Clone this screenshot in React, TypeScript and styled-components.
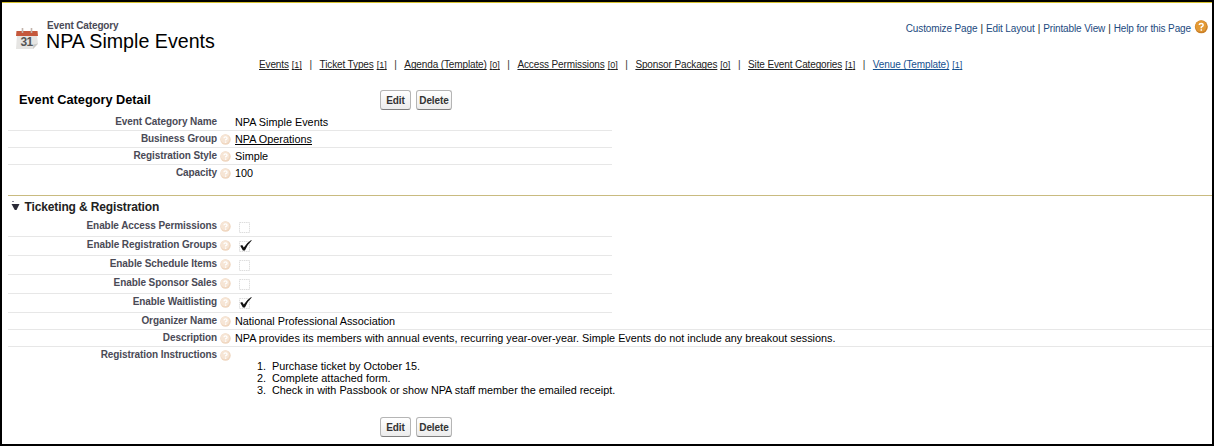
import React from "react";
import styled, { createGlobalStyle } from "styled-components";

const GlobalStyle = createGlobalStyle`
  *, *::before, *::after { box-sizing: border-box; }
  body { margin: 0; background: #fff; }
`;

const Page = styled.div`
  display: flex;
  flex-direction: column;
  width: 1214px;
  height: 446px;
  border: 2px solid #000;
  background: #fff;
  color: #000;
  font-family: "Liberation Sans", Arial, Helvetica, sans-serif;
  font-size: 10.84px;
  overflow: hidden;
  white-space: nowrap;
`;

const Header = styled.header`
  display: flex;
  justify-content: space-between;
  height: 54px;
  border-top: 1px solid #d6c02c;
  padding: 17px 4px 0 14px;
`;

const TitleBlock = styled.div`
  display: flex;
  gap: 8px;
`;

const CalendarIcon = styled.svg`
  width: 22px;
  height: 22px;
  margin-top: 8px;
`;

const Kind = styled.div`
  padding-left: 1px;
  font-size: 10px;
  letter-spacing: -0.13px;
  line-height: 12px;
  font-weight: bold;
  color: #4a4a56;
`;

const Title = styled.h1`
  margin: -3px 0 0;
  font-size: 19.65px;
  line-height: 24px;
  font-weight: normal;
`;

const HelpLinks = styled.nav`
  display: flex;
  align-items: flex-start;
  height: 16px;
  font-size: 10px;
  letter-spacing: -0.12px;
  line-height: 18px;
  color: #222;
`;

const HelpLink = styled.a`
  color: #1c4a80;
`;

const Divider = styled.span`
  margin: 0 3px;
`;

const HelpBall = styled.svg`
  width: 14px;
  height: 14px;
  margin: 0 0 0 3px;
`;

const RelatedLists = styled.nav`
  display: flex;
  height: 34px;
  padding: 2px 0 0 257px;
  font-size: 10px;
  letter-spacing: -0.125px;
  line-height: 14px;
`;

const RelatedItem = styled.span<{ $active?: boolean }>`
  color: ${(p) => (p.$active ? "#15508f" : "#222")};

  &:not(:first-child)::before {
    content: "|";
    margin: 0 7.6px;
    color: #333;
  }
`;

const RelatedLink = styled.a`
  text-decoration: underline 1px;
  text-underline-offset: 1px;
  text-decoration-skip-ink: none;
`;

const Count = styled(RelatedLink)`
  margin-left: 3px;
  font-size: 9px;
  letter-spacing: 0;
`;

const Toolbar = styled.div`
  display: flex;
  height: 24px;
  padding-left: 17px;
`;

const DetailHeading = styled.h2`
  width: 361px;
  margin: 0;
  font-size: 12.75px;
  line-height: 19px;
`;

const Button = styled.button<{ $width: number }>`
  width: ${(p) => p.$width}px;
  height: 20px;
  margin-right: 5px;
  padding: 0;
  border: 1px solid #b5b5b5;
  border-bottom-color: #7f7f7f;
  border-radius: 3px;
  background: linear-gradient(#fff, #ececec);
  color: #333;
  font: bold 10px/17px "Liberation Sans", Arial, sans-serif;
  letter-spacing: -0.1px;
`;

const Fields = styled.section`
  padding-left: 6px;
`;

const Row = styled.div<{ $height?: number; $wide?: boolean; $last?: boolean }>`
  display: flex;
  width: ${(p) => (p.$wide ? "1204px" : "604px")};
  height: ${(p) => p.$height ?? 17}px;
  border-bottom: 1px solid ${(p) => (p.$last ? "transparent" : "#e7e7e7")};
`;

const Label = styled.div`
  width: 209px;
  text-align: right;
  font-size: 10px;
  letter-spacing: -0.08px;
  line-height: 15px;
  font-weight: bold;
  color: #4a4a56;
`;

const HelpSlot = styled.div`
  width: 18px;
  padding: 2.5px 0 0 3px;
  line-height: 0;
`;

const Value = styled.div`
  line-height: 16px;
`;

const ValueLink = styled.a`
  display: inline-block;
  height: 14px;
  line-height: 16px;
  border-bottom: 1px solid #000;
`;

const CheckIcon = styled.svg`
  display: block;
  width: 16px;
  height: 16px;
  margin: 0 0 0 3px;
`;

const SectionHeading = styled.h3`
  display: flex;
  align-items: flex-start;
  height: 23px;
  margin: 13px 0 0 6px;
  padding: 2px 0 0 3px;
  border-top: 1px solid #c9bb80;
  font-size: 12px;
  letter-spacing: -0.13px;
  line-height: 18px;
  color: #222;
`;

const Twisty = styled.svg`
  width: 9px;
  height: 12px;
  margin: 2px 4.5px 0 0;
`;

const Steps = styled.ol`
  margin: 13px 0 0;
  padding: 0 0 0 22px;
  line-height: 12px;
  list-style: none;
  counter-reset: step;
`;

const Step = styled.li`
  display: flex;
  counter-increment: step;

  &::before {
    content: counter(step) ".";
    width: 15px;
  }
`;

const Footer = styled.div`
  display: flex;
  margin-top: auto;
  padding: 0 0 7px 378px;
`;

function FieldHelp() {
  return (
    <svg width="11" height="11" viewBox="0 0 11 11">
      <circle cx="5.5" cy="5.5" r="5.2" fill="#efd6bf" />
      <circle cx="5" cy="4.8" r="4.4" fill="#f6e5d5" />
      <path d="M3.9 4.2Q4 2.9 5.5 2.9T7.1 4.2Q7.1 5 5.6 5.8V6.6M5.6 7.5V8.7" fill="none" stroke="#fff" strokeWidth="1.3" />
    </svg>
  );
}

function Check({ checked }: { checked: boolean }) {
  return (
    <CheckIcon viewBox="0 0 16 16">
      <rect x="1.5" y="4.5" width="10" height="10" fill="none" stroke="#ddd" strokeDasharray="1.5 .7" />
      {checked && <path d="M2.2 8.8 4.2 7.9 5.8 10.5Q8.5 5.8 13.2 2.9L13.7 3.4Q9.5 7.3 6.9 13.4H4.9Z" fill="#111" />}
    </CheckIcon>
  );
}

const related: [string, number][] = [
  ["Events", 1],
  ["Ticket Types", 1],
  ["Agenda (Template)", 0],
  ["Access Permissions", 0],
  ["Sponsor Packages", 0],
  ["Site Event Categories", 1],
  ["Venue (Template)", 1],
];

const options: [string, boolean][] = [
  ["Enable Access Permissions", false],
  ["Enable Registration Groups", true],
  ["Enable Schedule Items", false],
  ["Enable Sponsor Sales", false],
  ["Enable Waitlisting", true],
];

const helpLinks = ["Customize Page", "Edit Layout", "Printable View", "Help for this Page"];

interface FieldProps {
  label: string;
  help?: boolean;
  height?: number;
  wide?: boolean;
  last?: boolean;
  children: React.ReactNode;
}

function Field({ label, help = true, height, wide, last, children }: FieldProps) {
  return (
    <Row $height={height} $wide={wide} $last={last}>
      <Label>{label}</Label>
      <HelpSlot>{help && <FieldHelp />}</HelpSlot>
      <Value>{children}</Value>
    </Row>
  );
}

function Actions() {
  return (
    <>
      <Button $width={31}>Edit</Button>
      <Button $width={36}>Delete</Button>
    </>
  );
}

export default function App() {
  return (
    <Page>
      <GlobalStyle />
      <Header>
        <TitleBlock>
          <CalendarIcon viewBox="0 0 22 22">
            <path d="M1 7H21L22 16 17 21H0Z" fill="#e6e5e3" />
            <path d="M22 15.5 17 21 17.5 16.5Z" fill="#c9c8c6" />
            <path d="M.5 3H21.5L22 8H0Z" fill="#c5583c" />
            <path d="M6.5 0V5M15.5 0V5" stroke="#c3b4ab" strokeWidth="1.6" />
            <text x="10.6" y="18" textAnchor="middle" fontSize="12" letterSpacing="-.5" fontWeight="bold" fill="#555">31</text>
          </CalendarIcon>
          <div>
            <Kind>Event Category</Kind>
            <Title>NPA Simple Events</Title>
          </div>
        </TitleBlock>
        <HelpLinks>
          {helpLinks.map((text, i) => (
            <React.Fragment key={text}>
              {i > 0 && <Divider>|</Divider>}
              <HelpLink>{text}</HelpLink>
            </React.Fragment>
          ))}
          <HelpBall viewBox="0 0 14 14">
            <circle cx="7.3" cy="6.8" r="6.5" fill="#c97f27" />
            <circle cx="7" cy="6.2" r="5.6" fill="#e39a35" />
            <path d="M5.2 5Q5.3 3.4 7.2 3.4T9.2 5Q9.2 6.1 7.3 7.1V8.2M7.3 9.2V10.8" fill="none" stroke="#fff" strokeWidth="1.5" />
          </HelpBall>
        </HelpLinks>
      </Header>
      <RelatedLists>
        {related.map(([text, count], i) => (
          <RelatedItem key={text} $active={i === related.length - 1}>
            <RelatedLink>{text}</RelatedLink>
            <Count>[{count}]</Count>
          </RelatedItem>
        ))}
      </RelatedLists>
      <Toolbar>
        <DetailHeading>Event Category Detail</DetailHeading>
        <Actions />
      </Toolbar>
      <Fields>
        <Field label="Event Category Name" help={false}>NPA Simple Events</Field>
        <Field label="Business Group"><ValueLink>NPA Operations</ValueLink></Field>
        <Field label="Registration Style">Simple</Field>
        <Field label="Capacity" last>100</Field>
      </Fields>
      <SectionHeading>
        <Twisty viewBox="0 0 9 12">
          <path d="M1 1.5H3" stroke="#889" />
          <path d="M.5 4H8.5L5.5 10H3.8Z" fill="#2b2b38" />
        </Twisty>
        Ticketing &amp; Registration
      </SectionHeading>
      <Fields>
        {options.map(([label, checked]) => (
          <Field key={label} label={label} height={19}><Check checked={checked} /></Field>
        ))}
        <Field label="Organizer Name" wide>National Professional Association</Field>
        <Field label="Description" wide>
          NPA provides its members with annual events, recurring year-over-year. Simple Events do not include any breakout sessions.
        </Field>
        <Field label="Registration Instructions" height={52} wide last>
          <Steps>
            <Step>Purchase ticket by October 15.</Step>
            <Step>Complete attached form.</Step>
            <Step>Check in with Passbook or show NPA staff member the emailed receipt.</Step>
          </Steps>
        </Field>
      </Fields>
      <Footer>
        <Actions />
      </Footer>
    </Page>
  );
}
